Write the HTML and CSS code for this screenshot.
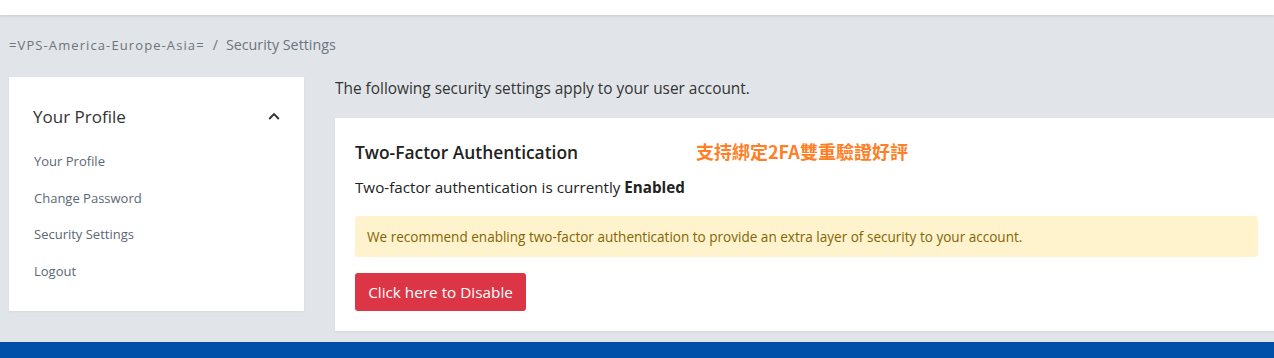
FILE: index.html
```html
<!DOCTYPE html>
<html lang="en">
<head>
<meta charset="utf-8">
<title>Security Settings</title>
<link rel="stylesheet" href="styles.css">
</head>
<body>
<header class="topbar"></header>
<main class="page">
  <nav class="breadcrumb">
    <span class="crumb-home">=VPS-America-Europe-Asia=</span>
    <span class="crumb-sep">/</span>
    <span class="crumb-current">Security Settings</span>
  </nav>
  <div class="layout">
    <aside class="side-card">
      <div class="side-head">
        <span class="side-title">Your Profile</span>
        <svg class="chev" width="12" height="8" viewBox="0 0 12 8"><path d="M1.2 7 L6 2 L10.8 7" fill="none" stroke="#333" stroke-width="1.9"/></svg>
      </div>
      <ul class="side-links">
        <li>Your Profile</li>
        <li>Change Password</li>
        <li>Security Settings</li>
        <li>Logout</li>
      </ul>
    </aside>
    <section class="main-col">
      <p class="intro">The following security settings apply to your user account.</p>
      <div class="card">
        <h2 class="card-title">Two-Factor Authentication</h2>
        <span class="promo">支持綁定2FA雙重驗證好評</span>
        <p class="status">Two-factor authentication is currently <strong>Enabled</strong></p>
        <div class="alert">We recommend enabling two-factor authentication to provide an extra layer of security to your account.</div>
        <button class="btn-danger">Click here to Disable</button>
      </div>
    </section>
  </div>
</main>
<footer class="footer"></footer>
</body>
</html>
```
FILE: styles.css
```css
* { box-sizing: border-box; }
html, body { margin: 0; padding: 0; }
body {
  width: 1274px;
  height: 358px;
  overflow: hidden;
  background: #e1e5e9;
  font-family: "Open Sans", "Noto Sans", sans-serif;
  color: #333;
}
.topbar {
  height: 15px;
  background: #fff;
  box-shadow: 0 1px 3px rgba(0,0,0,0.12);
  position: relative;
  z-index: 1;
}
.page {
  height: 327px;
  padding: 0 0 0 9px;
}
.breadcrumb {
  height: 62px;
  padding-top: 20px;
  display: flex;
  align-items: baseline;
  gap: 6px;
  color: #6c757d;
}
.crumb-home { font-size: 13px; letter-spacing: 1.1px; }
.crumb-sep { font-size: 14px; padding: 0 2px; }
.crumb-current { font-size: 14.3px; }
.layout {
  display: grid;
  grid-template-columns: 295px 943px;
  column-gap: 31px;
  align-items: start;
}
.side-card {
  background: #fff;
  height: 234px;
  padding: 28px 24px 0 24px;
  box-shadow: 0 1px 2px rgba(0,0,0,0.06);
}
.side-head {
  display: flex;
  justify-content: space-between;
  align-items: center;
  height: 22px;
}
.side-title { font-size: 17px; color: #333; }
.side-links {
  list-style: none;
  margin: 24px 0 0 1px;
  padding: 0;
  font-size: 13px;
  color: #5b6775;
}
.side-links li { height: 36.7px; line-height: 20px; }
.intro {
  margin: 1px 0 0 0;
  font-size: 15.4px;
  color: #333;
  line-height: 22px;
}
.card {
  position: relative;
  margin: 18px 0 0 0;
  background: #fff;
  height: 213px;
  padding: 23px 20px 0 20px;
  box-shadow: 0 1px 2px rgba(0,0,0,0.08);
}
.card-title {
  margin: 0;
  font-size: 17.4px;
  font-weight: 600;
  color: #222;
  line-height: 22px;
}
.promo {
  position: absolute;
  left: 361px;
  top: 22px;
  font-family: "Noto Sans CJK TC", "Noto Sans CJK SC", sans-serif;
  font-weight: 700;
  font-size: 18px;
  line-height: 22px;
  color: #ff7f27;
}
.status {
  margin: 14px 0 0 0;
  font-size: 15.2px;
  line-height: 21px;
  color: #222;
}
.status strong { font-weight: 700; }
.alert {
  margin-top: 18px;
  background: #fff3cd;
  color: #856404;
  font-size: 13.55px;
  line-height: 20px;
  padding: 11px 12px 10px 12px;
  border-radius: 3px;
}
.btn-danger {
  margin-top: 16px;
  display: block;
  background: #dc3545;
  color: #fff;
  border: none;
  border-radius: 3px;
  font-family: inherit;
  font-size: 15.3px;
  height: 38px;
  width: 171px;
  padding: 0;
}
.footer {
  height: 16px;
  background: #0050aa;
}
```
